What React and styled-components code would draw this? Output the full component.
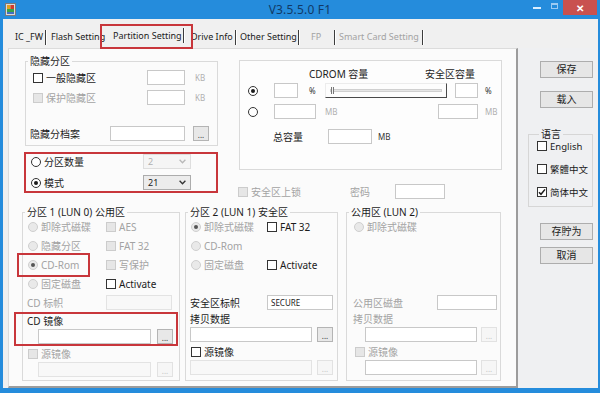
import React from "react";
import styled, { createGlobalStyle } from "styled-components";

const GlobalStyle = createGlobalStyle`
  html, body { margin: 0; padding: 0; background: #fff; }
  body {
    font-family: "Noto Sans", "Noto Sans CJK SC", sans-serif;
    font-size: 10px;
    color: #1b1b1b;
  }
  * { box-sizing: border-box; }
`;

const RED = "#c8363b";
const GREY_TEXT = "#a3a3a3";

function CheckBox({ checked, disabled }) {
  return (
    <Box $disabled={disabled}>
      {checked && (
        <svg width="8" height="8" viewBox="0 0 8 8">
          <path d="M1 4.2 L3 6.3 L7 1.4" stroke="#1b1b1b" strokeWidth="1.5" fill="none" />
        </svg>
      )}
    </Box>
  );
}

function Check({ label, checked, disabled, w, ml }) {
  return (
    <Option $w={w} $ml={ml} $disabled={disabled}>
      <CheckBox checked={checked} disabled={disabled} />
      <span>{label}</span>
    </Option>
  );
}

function Radio({ label, checked, disabled, w, ml }) {
  return (
    <Option $w={w} $ml={ml} $disabled={disabled}>
      <Circle $disabled={disabled}>{checked && <Dot $disabled={disabled} />}</Circle>
      {label && <span>{label}</span>}
    </Option>
  );
}

function Chevron({ color }) {
  return (
    <svg width="7" height="5" viewBox="0 0 7 5">
      <path d="M0.6 0.8 L3.5 3.8 L6.4 0.8" stroke={color} strokeWidth="1.3" fill="none" />
    </svg>
  );
}

function AppIcon() {
  return (
    <svg width="11" height="13" viewBox="0 0 11 13">
      <rect x="0.5" y="0.5" width="10" height="12" fill="#d9d9d9" stroke="#7a7a7a" />
      <rect x="2" y="2" width="3.5" height="4" fill="#e0a020" />
      <rect x="5.5" y="2" width="3.5" height="4" fill="#d23b2b" />
      <rect x="2" y="6" width="7" height="3" fill="#39a447" />
      <rect x="2" y="9" width="7" height="2" fill="#3f6fc4" />
    </svg>
  );
}

function BrowseRow({ w, ml, disabled, btnDisabled, gap = 5 }) {
  return (
    <Row $ml={ml} $mt={1}>
      <Field $w={w} $disabled={disabled} />
      <Browse $ml={gap} $disabled={btnDisabled}>...</Browse>
    </Row>
  );
}

export default function App() {
  return (
    <>
      <GlobalStyle />
      <Window>
        <TitleBar>
          <IconSlot>
            <AppIcon />
          </IconSlot>
          <Title>V3.5.5.0 F1</Title>
          <Controls>
            <MinBtn />
            <MaxBtn />
            <CloseBtn>✕</CloseBtn>
          </Controls>
        </TitleBar>

        <Frame>
          <TabStrip>
            <Tab $w={30}>IC _FW</Tab>
            <Sep />
            <Tab $w={57} $pl={4}>Flash Setting</Tab>
            <ActiveTab>
              <span>Partition Setting</span>
              <Sep />
            </ActiveTab>
            <Tab $w={45} $pl={1} $ml={-3}>Drive Info</Tab>
            <Sep />
            <Tab $w={61} $pl={3}>Other Setting</Tab>
            <Sep />
            <Tab $w={34} $pl={11} $disabled>FP</Tab>
            <Sep />
            <Tab $w={86} $pl={3} $disabled>Smart Card Setting</Tab>
            <Sep />
          </TabStrip>

          <Content>
            <Panel>
              <TopSection>
                <LeftCol>
                  <Group $w={193} $ml={3}>
                    <Legend>隐藏分区</Legend>
                    <GroupBody $pl={7} $pb={4}>
                      <Row $mt={2}>
                        <Check label="一般隐藏区" w={114} />
                        <Field $w={38} />
                        <Unit $ml={10} $muted>KB</Unit>
                      </Row>
                      <Row $mt={5}>
                        <Check label="保护隐藏区" disabled w={114} />
                        <Field $w={38} />
                        <Unit $ml={10} $muted>KB</Unit>
                      </Row>
                      <Row $mt={21} $ml={-3}>
                        <Label $w={80}>隐藏分档案</Label>
                        <Field $w={75} />
                        <Browse $ml={8}>...</Browse>
                      </Row>
                    </GroupBody>
                  </Group>

                  <ModeBox>
                    <Row>
                      <Radio label="分区数量" w={112} />
                      <Select $disabled>
                        <span>2</span>
                        <Chevron color="#b8b8b8" />
                      </Select>
                    </Row>
                    <Row>
                      <Radio label="模式" checked w={112} />
                      <Select>
                        <span>21</span>
                        <Chevron color="#333" />
                      </Select>
                    </Row>
                  </ModeBox>
                </LeftCol>

                <RightCol>
                  <CapacityBox>
                    <Row $ml={61}>
                      <Label $w={116}>CDROM 容量</Label>
                      <Label>安全区容量</Label>
                    </Row>
                    <Row $mt={2}>
                      <Radio checked />
                      <Field $w={24} $ml={16} />
                      <Unit $ml={11} $w={16}>%</Unit>
                      <Slider>
                        <Track />
                        <Thumb />
                      </Slider>
                      <Field $w={23} $ml={8} />
                      <Unit $ml={7}>%</Unit>
                    </Row>
                    <Row $mt={6}>
                      <Radio />
                      <Field $w={42} $ml={16} />
                      <Unit $ml={9} $w={113} $muted>MB</Unit>
                      <Field $w={40} />
                      <Unit $ml={7} $muted>MB</Unit>
                    </Row>
                    <Row $mt={10} $ml={25}>
                      <Label $w={55}>总容量</Label>
                      <Field $w={44} />
                      <Unit $ml={6}>MB</Unit>
                    </Row>
                  </CapacityBox>
                  <Row $mt={14} $ml={-1}>
                    <Check label="安全区上锁" disabled w={112} />
                    <Label $w={45} $muted>密码</Label>
                    <Field $w={50} />
                  </Row>
                </RightCol>
              </TopSection>

              <GroupsRow>
                <LunGroup $w={158}>
                  <Legend>分区 1 (LUN 0) 公用区</Legend>
                  <LunBody $pl={5}>
                    <OptionArea>
                      <Row>
                        <Radio label="卸除式磁碟" disabled w={78} />
                        <Check label="AES" disabled />
                      </Row>
                      <Row>
                        <Radio label="隐藏分区" disabled w={78} />
                        <Check label="FAT 32" disabled />
                      </Row>
                      <Row>
                        <HiliteRadio>
                          <Radio label="CD-Rom" checked disabled />
                        </HiliteRadio>
                        <Check label="写保护" disabled ml={16} />
                      </Row>
                      <Row>
                        <Radio label="固定磁盘" disabled w={78} />
                        <Check label="Activate" />
                      </Row>
                    </OptionArea>
                    <Row $ml={-1}>
                      <Label $w={79} $muted>CD 标帜</Label>
                      <Field $w={66} $disabled />
                    </Row>
                    <ImageBox>
                      <Caption>CD 镜像</Caption>
                      <BrowseRow w={113} ml={11} gap={6} />
                    </ImageBox>
                    <Row>
                      <Check label="源镜像" disabled />
                    </Row>
                    <BrowseRow w={113} ml={10} gap={6} disabled btnDisabled />
                  </LunBody>
                </LunGroup>

                <LunGroup $w={153} $ml={5}>
                  <Legend>分区 2 (LUN 1) 安全区</Legend>
                  <LunBody $pl={5}>
                    <OptionArea>
                      <Row>
                        <Radio label="卸除式磁碟" checked disabled w={76} />
                        <Check label="FAT 32" />
                      </Row>
                      <Row>
                        <Radio label="CD-Rom" disabled />
                      </Row>
                      <Row>
                        <Radio label="固定磁盘" disabled w={76} />
                        <Check label="Activate" />
                      </Row>
                    </OptionArea>
                    <Row $ml={-1}>
                      <Label $w={77}>安全区标帜</Label>
                      <Field $w={66}>SECURE</Field>
                    </Row>
                    <Caption $mt={2} $ml={-1}>拷贝数据</Caption>
                    <BrowseRow w={122} ml={-1} />
                    <Row $mt={2}>
                      <Check label="源镜像" />
                    </Row>
                    <BrowseRow w={122} ml={-1} disabled btnDisabled />
                  </LunBody>
                </LunGroup>

                <LunGroup $w={155} $ml={8}>
                  <Legend>公用区 (LUN 2)</Legend>
                  <LunBody $pl={7}>
                    <OptionArea>
                      <Row>
                        <Radio label="卸除式磁碟" disabled />
                      </Row>
                    </OptionArea>
                    <Row $ml={-1}>
                      <Label $w={84} $muted>公用区磁盘</Label>
                      <Field $w={60} />
                    </Row>
                    <Caption $mt={2} $ml={-1} $muted>拷贝数据</Caption>
                    <BrowseRow w={112} ml={11} gap={4} btnDisabled />
                    <Row $mt={2} $ml={1}>
                      <Check label="源镜像" disabled />
                    </Row>
                    <BrowseRow w={112} ml={11} gap={4} btnDisabled />
                  </LunBody>
                </LunGroup>
              </GroupsRow>
            </Panel>

            <Sidebar>
              <Button>保存</Button>
              <Button $mt={13}>载入</Button>
              <LangGroup>
                <Legend>语言</Legend>
                <LangBody>
                  <Check label="English" />
                  <Check label="繁體中文" />
                  <Check label="简体中文" checked />
                </LangBody>
              </LangGroup>
              <Button $mt={16}>存貯为</Button>
              <Button $mt={7}>取消</Button>
            </Sidebar>
          </Content>
        </Frame>
      </Window>
    </>
  );
}

const Window = styled.div`
  width: 600px;
  height: 393px;
  background: #258cdc;
  display: flex;
  flex-direction: column;
  overflow: hidden;
`;

const TitleBar = styled.div`
  height: 19px;
  display: grid;
  grid-template-columns: 1fr auto 1fr;
  align-items: center;
`;

const IconSlot = styled.div`
  display: flex;
  padding-left: 5px;
`;

const Title = styled.div`
  font-size: 12px;
  color: #123a66;
  letter-spacing: 0.2px;
`;

const Controls = styled.div`
  justify-self: end;
  align-self: start;
  display: flex;
  align-items: flex-start;
  margin-right: 3px;
`;

const MinBtn = styled.div`
  width: 8px;
  height: 2px;
  margin-top: 7px;
  margin-right: 10px;
  background: #dbeeff;
`;

const MaxBtn = styled.div`
  width: 7px;
  height: 6px;
  margin-top: 3px;
  margin-right: 5px;
  border: 1px solid #9ccaf2;
  border-top-width: 2px;
`;

const CloseBtn = styled.div`
  width: 34px;
  height: 15px;
  background: #c9514f;
  color: #fff;
  font-size: 10px;
  font-weight: 700;
  display: flex;
  align-items: center;
  justify-content: center;
`;

const Frame = styled.div`
  flex: 1;
  margin: 0 2px 5px 3px;
  background: #f0f0f0;
  display: flex;
  flex-direction: column;
  min-height: 0;
`;

const TabStrip = styled.div`
  height: 29px;
  display: flex;
  align-items: flex-end;
  padding-left: 12px;
  font-size: 9px;
`;

const Tab = styled.div`
  width: ${(p) => p.$w}px;
  height: 23px;
  flex-shrink: 0;
  display: flex;
  align-items: center;
  padding-left: ${(p) => p.$pl || 0}px;
  margin-left: ${(p) => p.$ml || 0}px;
  color: ${(p) => (p.$disabled ? GREY_TEXT : "#1b1b1b")};
  white-space: nowrap;
`;

const ActiveTab = styled.div`
  position: relative;
  z-index: 1;
  width: 93px;
  height: 25px;
  margin-left: -4px;
  margin-bottom: -1px;
  flex-shrink: 0;
  display: flex;
  align-items: center;
  justify-content: space-between;
  padding: 0 6px 2px 11px;
  border: 2px solid ${RED};
  white-space: nowrap;
`;

const Sep = styled.div`
  width: 2px;
  height: 15px;
  flex-shrink: 0;
  align-self: flex-end;
  margin-bottom: 3px;
  border-left: 1px solid #3c3c3c;
  border-right: 1px solid #ffffff;

  ${ActiveTab} & {
    align-self: center;
    margin-bottom: 0;
  }
`;

const Content = styled.div`
  flex: 1;
  display: flex;
  min-height: 0;
`;

const Panel = styled.div`
  width: 510px;
  margin-left: 5px;
  background: #fbfbfb;
  border: 1px solid #dcdcdc;
  border-right: 2px solid #9c9c9c;
  border-bottom: 2px solid #9c9c9c;
  padding: 5px 0 0 13px;
`;

const TopSection = styled.div`
  display: flex;
  align-items: flex-start;
`;

const LeftCol = styled.div`
  width: 196px;
  display: flex;
  flex-direction: column;
`;

const RightCol = styled.div`
  margin-left: 21px;
  margin-top: 6px;
  display: flex;
  flex-direction: column;
`;

const Group = styled.fieldset`
  margin: 0 0 0 ${(p) => p.$ml || 0}px;
  padding: 0;
  min-width: 0;
  width: ${(p) => p.$w}px;
  border: 1px solid #dadada;
`;

const Legend = styled.legend`
  margin-left: 2px;
  padding: 0 2px;
  font-size: 10px;
  line-height: 14px;
  color: #1b1b1b;
  white-space: nowrap;
`;

const GroupBody = styled.div`
  padding-left: ${(p) => p.$pl || 0}px;
  padding-bottom: ${(p) => p.$pb || 0}px;
  display: flex;
  flex-direction: column;
`;

const Row = styled.div`
  display: flex;
  align-items: center;
  height: 15px;
  margin-top: ${(p) => p.$mt || 0}px;
  margin-left: ${(p) => p.$ml || 0}px;
  flex-shrink: 0;
`;

const Option = styled.div`
  display: flex;
  align-items: center;
  gap: 3px;
  height: 14px;
  flex-shrink: 0;
  width: ${(p) => (p.$w ? `${p.$w}px` : "auto")};
  margin-left: ${(p) => p.$ml || 0}px;
  color: ${(p) => (p.$disabled ? GREY_TEXT : "#1b1b1b")};
  white-space: nowrap;
`;

const Box = styled.span`
  width: 10px;
  height: 10px;
  flex-shrink: 0;
  display: flex;
  align-items: center;
  justify-content: center;
  border: 1px solid ${(p) => (p.$disabled ? "#cccccc" : "#333333")};
  background: ${(p) => (p.$disabled ? "#e6e6e6" : "#ffffff")};
`;

const Circle = styled.span`
  width: 10px;
  height: 10px;
  flex-shrink: 0;
  border-radius: 50%;
  display: flex;
  align-items: center;
  justify-content: center;
  border: 1px solid ${(p) => (p.$disabled ? "#cfcfcf" : "#333333")};
  background: ${(p) => (p.$disabled ? "#e9e9e9" : "#ffffff")};
`;

const Dot = styled.span`
  width: 4px;
  height: 4px;
  border-radius: 50%;
  background: ${(p) => (p.$disabled ? "#555" : "#1b1b1b")};
`;

const Label = styled.div`
  width: ${(p) => (p.$w ? `${p.$w}px` : "auto")};
  flex-shrink: 0;
  line-height: 14px;
  color: ${(p) => (p.$muted ? GREY_TEXT : "#1b1b1b")};
  white-space: nowrap;
`;

const Caption = styled(Label)`
  margin-top: ${(p) => p.$mt || 0}px;
  margin-left: ${(p) => p.$ml || 0}px;
`;

const Unit = styled.div`
  width: ${(p) => (p.$w ? `${p.$w}px` : "auto")};
  margin-left: ${(p) => p.$ml || 0}px;
  flex-shrink: 0;
  font-size: 8px;
  color: ${(p) => (p.$muted ? "#b0b0b0" : "#333")};
`;

const Field = styled.div`
  width: ${(p) => p.$w}px;
  height: 15px;
  flex-shrink: 0;
  margin-left: ${(p) => p.$ml || 0}px;
  border: 1px solid ${(p) => (p.$disabled ? "#e3e3e3" : "#c8c8c8")};
  background: ${(p) => (p.$disabled ? "#f8f8f8" : "#ffffff")};
  font-size: 8px;
  line-height: 13px;
  padding-left: 3px;
  color: #222;
`;

const Browse = styled.div`
  width: 16px;
  height: 15px;
  flex-shrink: 0;
  margin-left: ${(p) => p.$ml || 0}px;
  border: 1px solid ${(p) => (p.$disabled ? "#e2e2e2" : "#b4b4b4")};
  background: ${(p) => (p.$disabled ? "#f6f6f6" : "#e8e8e8")};
  color: ${(p) => (p.$disabled ? "#c4c4c4" : "#333")};
  font-size: 8px;
  line-height: 15px;
  text-align: center;
`;

const Select = styled.div`
  width: 48px;
  height: 15px;
  flex-shrink: 0;
  display: flex;
  align-items: center;
  justify-content: space-between;
  padding: 0 4px 0 4px;
  font-size: 9px;
  border: 1px solid ${(p) => (p.$disabled ? "#dedede" : "#acacac")};
  background: ${(p) => (p.$disabled ? "#f5f5f5" : "#ececec")};
  color: ${(p) => (p.$disabled ? "#b0b0b0" : "#1b1b1b")};
`;

const ModeBox = styled.div`
  margin: 6px 0 0 2px;
  width: 194px;
  height: 41px;
  border: 2px solid ${RED};
  padding-left: 5px;
  display: flex;
  flex-direction: column;
  gap: 6px;
`;

const CapacityBox = styled.div`
  width: 263px;
  border: 1px solid #dadada;
  background: #fdfdfd;
  padding: 5px 0 25px 8px;
  display: flex;
  flex-direction: column;
`;

const Slider = styled.div`
  position: relative;
  width: 122px;
  height: 15px;
  flex-shrink: 0;
  border: 1px solid;
  border-color: #ececec #4a4a4a #4a4a4a #ececec;
  display: flex;
  align-items: center;
  padding: 0 4px;
`;

const Track = styled.div`
  flex: 1;
  height: 3px;
  border: 1px solid #d0d0d0;
  background: #e6e6e6;
`;

const Thumb = styled.div`
  position: absolute;
  left: 5px;
  top: 3px;
  width: 3px;
  height: 7px;
  border-left: 1px solid #777;
  border-right: 1px solid #777;
  background: #f4f4f4;
`;

const GroupsRow = styled.div`
  display: flex;
  margin-top: 6px;
  height: 176px;
`;

const LunGroup = styled.fieldset`
  margin: 0 0 0 ${(p) => p.$ml || 0}px;
  padding: 0;
  min-width: 0;
  width: ${(p) => p.$w}px;
  border: 1px solid #dadada;
  display: flex;
  flex-direction: column;
`;

const LunBody = styled.div`
  padding-left: ${(p) => p.$pl}px;
  display: flex;
  flex-direction: column;
`;

const OptionArea = styled.div`
  height: 76px;
  display: flex;
  flex-direction: column;
  gap: 4px;
`;

const HiliteRadio = styled.div`
  width: 73px;
  height: 24px;
  margin: -5px 0 -5px -11px;
  padding-left: 9px;
  border: 2px solid ${RED};
  display: flex;
  align-items: center;
`;

const ImageBox = styled.div`
  width: 164px;
  height: 34px;
  margin: 2px 0 0 -14px;
  padding-left: 11px;
  border: 2px solid ${RED};
  display: flex;
  flex-direction: column;
`;

const Sidebar = styled.div`
  flex: 1;
  padding: 13px 0 0 22px;
  display: flex;
  flex-direction: column;
  align-items: flex-start;
  background: #eff0f2;
`;

const Button = styled.div`
  width: 53px;
  height: 17px;
  margin-top: ${(p) => p.$mt || 0}px;
  border: 1px solid #adadad;
  background: #e6e6e6;
  font-size: 10px;
  line-height: 15px;
  text-align: center;
  color: #1b1b1b;
`;

const LangGroup = styled.fieldset`
  margin: 19px 0 0 -12px;
  padding: 0 0 7px 8px;
  width: 65px;
  min-width: 0;
  border: 1px solid #d6d6d6;
`;

const LangBody = styled.div`
  display: flex;
  flex-direction: column;
  gap: 9px;
  padding-top: 0;
  margin-top: -2px;
  font-size: 9.5px;
`;
